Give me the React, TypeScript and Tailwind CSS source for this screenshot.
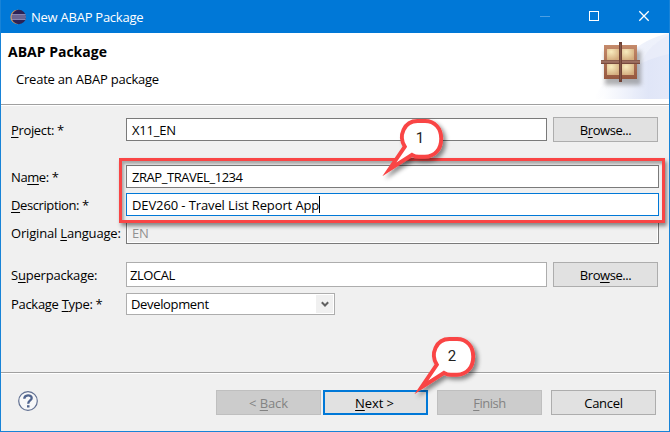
import type { ReactNode } from "react";

const U = ({ children }: { children: ReactNode }) => (
  <span className="underline decoration-1 underline-offset-2">{children}</span>
);

function Row({ label, labelClass, className, children }: { label: ReactNode; labelClass: string; className: string; children: ReactNode }) {
  return (
    <div className={`flex items-center ${className}`}>
      <label className={`w-[118px] shrink-0 whitespace-nowrap pl-[3px] ${labelClass}`}>{label}</label>
      {children}
    </div>
  );
}

function Button({ children, className }: { children: ReactNode; className: string }) {
  return (
    <button className={`flex h-[25px] w-[105px] shrink-0 items-center justify-center ${className}`}>{children}</button>
  );
}

const normal = "border border-[#adadad] bg-[#e1e1e1]";
const disabled = "border border-[#bfbfbf] bg-[#cccccc] text-[#838383]";

function EclipseIcon() {
  return (
    <svg width="18" height="16" viewBox="0 0 18 16">
      <circle cx="8.6" cy="8" r="7.2" fill="#d99a5a" />
      <circle cx="9.8" cy="8" r="7.2" fill="#2c2255" />
      <path d="M2.8 5.9h13.8M2.2 8h14.8M2.8 10.1h13.8" stroke="#a5a6cf" strokeWidth="1.1" />
    </svg>
  );
}

function PackageBanner() {
  return (
    <svg width="76" height="71" viewBox="593 33 76 71">
      <defs>
        <linearGradient id="haze" x1="0" x2="1">
          <stop offset="0" stopColor="#fff" />
          <stop offset="0.7" stopColor="#dfe5f7" />
          <stop offset="1" stopColor="#e3e8f8" />
        </linearGradient>
        <linearGradient id="frame" x1="0" x2="0" y1="0" y2="1">
          <stop offset="0" stopColor="#c58b6b" />
          <stop offset="1" stopColor="#96583f" />
        </linearGradient>
        <radialGradient id="pane" cx="0.35" cy="0.25" r="0.8">
          <stop offset="0" stopColor="#f8ebbd" />
          <stop offset="1" stopColor="#d4ad7e" />
        </radialGradient>
        <linearGradient id="barH" x1="0" x2="0" y1="0" y2="1">
          <stop offset="0" stopColor="#805344" />
          <stop offset="0.5" stopColor="#a7796a" />
          <stop offset="1" stopColor="#683b30" />
        </linearGradient>
        <filter id="soft" x="-50%" y="-50%" width="200%" height="200%">
          <feGaussianBlur stdDeviation="2" />
        </filter>
      </defs>
      <path d="M669 33C637 41 614 61 594 99H669Z" fill="url(#haze)" opacity="0.55" />
      <path d="M669 35C648 46 638 58 632 99H669Z" fill="#e3e8f8" opacity="0.5" />
      <path d="M669 54C640 60 615 76 600 99H669Z" fill="url(#haze)" opacity="0.9" />
      <rect x="605" y="51" width="36" height="34" fill="#666" opacity="0.5" filter="url(#soft)" />
      <rect x="604" y="45" width="33" height="34" fill="url(#frame)" />
      <rect x="607" y="49" width="12" height="11" fill="url(#pane)" />
      <rect x="622" y="49" width="12" height="11" fill="url(#pane)" />
      <rect x="607" y="64" width="12" height="11" fill="url(#pane)" />
      <rect x="622" y="64" width="12" height="11" fill="url(#pane)" />
      <rect x="601" y="60" width="39" height="4" fill="url(#barH)" />
      <rect x="619" y="42" width="3" height="40" fill="#704236" />
      <path d="M620.5 44V80" stroke="#805648" />
    </svg>
  );
}

function Callout({ n, className }: { n: string; className: string }) {
  return (
    <div className={`absolute h-[72px] w-[76px] ${className}`}>
      <svg className="absolute inset-0" width="76" height="72" viewBox="0 0 76 72">
        <defs>
          <filter id={`shade${n}`} x="-30%" y="-30%" width="170%" height="170%">
            <feDropShadow dx="3" dy="3" stdDeviation="2.2" floodColor="#000" floodOpacity="0.45" />
          </filter>
        </defs>
        <path
          d="M27.8 30.6C21 20 27 5 40.5 5H48C58 5 64.2 12.5 64.2 22.7C64.2 33 58 40.7 48 40.7H42C39 40.7 37 40 35 38.8L12.3 53.4Z"
          fill="#fff" stroke="#f94545" strokeWidth="3.9" strokeMiterlimit="10" filter={`url(#shade${n})`}
        />
      </svg>
      <span className="absolute left-[23px] top-[12px] w-[40px] text-center font-['Roboto',sans-serif] text-[15px] leading-5 tracking-normal text-[#222]">{n}</span>
    </div>
  );
}

export default function App() {
  return (
    <div className="relative flex h-[432px] w-[670px] flex-col overflow-hidden border border-t-0 border-[#1883d7] bg-[#f0f0f0] font-['Open_Sans',sans-serif] text-[13px] leading-[18px] tracking-[-0.3px] text-black">
      <header className="flex h-[33px] shrink-0 items-center bg-[#0078d7] pl-[8px] text-white">
        <EclipseIcon />
        <h1 className="ml-[4px] tracking-[-0.25px]">New ABAP Package</h1>
        <svg className="ml-auto" width="130" height="33" viewBox="539 0 130 33" fill="none" stroke="#fff">
          <path d="M540 16.5h10" stroke="#4c9fe3" />
          <rect x="589.5" y="11.5" width="9" height="9" />
          <path d="M639.3 11.3l9.4 9.4M648.7 11.3l-9.4 9.4" strokeWidth="1.3" />
        </svg>
      </header>

      <section className="flex h-[72px] shrink-0 justify-between border-b border-[#a0a0a0] bg-white">
        <div className="pl-[7px] pt-[10px]">
          <h2 className="text-[14px] font-bold tracking-normal">ABAP Package</h2>
          <p className="ml-[8px] mt-[9px] tracking-[-0.22px]">Create an ABAP package</p>
        </div>
        <PackageBanner />
      </section>

      <main className="h-[267px] shrink-0 border-t border-white pl-[7px] pt-[11px]">
        <Row className="h-[25px]" labelClass="tracking-[-0.35px]" label={<><U>P</U>roject: *</>}>
          <div className="flex h-[23px] w-[421px] items-center border border-[#7a7a7a] bg-white pl-[5px] tracking-[-0.2px]">X11_EN</div>
          <Button className={`ml-[6px] tracking-[-0.45px] ${normal}`}><span>B<U>r</U>owse...</span></Button>
        </Row>
        <Row className="mt-[23px] h-[23px]" labelClass="tracking-[-0.4px]" label={<>Na<U>m</U>e: *</>}>
          <div className="flex h-[23px] w-[533px] items-center border border-[#7a7a7a] bg-white pl-[5px] tracking-[-0.45px]">ZRAP_TRAVEL_1234</div>
        </Row>
        <Row className="mt-[5px] h-[23px]" labelClass="tracking-[-0.4px]" label={<><U>D</U>escription: *</>}>
          <div className="flex h-[23px] w-[533px] items-center border border-[#0078d7] bg-white pl-[5px] tracking-[-0.11px]">
            DEV260 - Travel List Report App<i className="h-[17px] w-px bg-black" />
          </div>
        </Row>
        <Row className="mt-[5px] h-[23px]" labelClass="tracking-[-0.18px]" label={<>Original <U>L</U>anguage:</>}>
          <div className="h-[23px] w-[533px] border border-[#7a7a7a]">
            <div className="flex h-full items-center border border-white pl-[4px] text-[#919191]">EN</div>
          </div>
        </Row>
        <Row className="mt-[18px] h-[25px]" labelClass="tracking-[-0.2px]" label={<>S<U>u</U>perpackage:</>}>
          <div className="flex h-[25px] w-[421px] items-center border border-[#adadad] bg-white pl-[3px] tracking-[-0.45px]">ZLOCAL</div>
          <Button className={`ml-[6px] tracking-[-0.45px] ${normal}`}><span>Bro<U>w</U>se...</span></Button>
        </Row>
        <Row className="mt-[6px] h-[22px]" labelClass="tracking-[-0.3px]" label={<>Package <U>T</U>ype: *</>}>
          <div className="flex h-[22px] w-[209px] items-center justify-between border border-[#adadad] bg-white pl-[4px] pr-px tracking-[-0.35px]">
            Development
            <span className="flex h-[18px] w-[17px] items-center justify-center bg-[#f0f0f0]">
              <svg width="8" height="7" viewBox="0 0 8 7" fill="none" stroke="#606060" strokeWidth="2"><path d="M.8 1.3L4 4.5 7.2 1.3" /></svg>
            </span>
          </div>
        </Row>
      </main>

      <footer className="flex h-[59px] shrink-0 border-t border-[#a0a0a0]">
        <div className="flex w-full border-t border-white pl-[17px] pt-[16px]">
          <svg className="mt-[1px]" width="20" height="20" viewBox="0 0 20 20" fill="none">
            <circle cx="10" cy="10" r="9.3" fill="#f7f7f8" stroke="#617092" strokeWidth="1.2" />
            <path d="M6.3 7.8C6.3 3.3 13.7 3.2 13.7 7.1C13.7 9.6 10.2 9.4 10.2 12.7" stroke="#50648e" strokeWidth="2.3" />
            <path d="M9 14.2h2.5v2.3H9z" fill="#50648e" />
          </svg>
          <Button className={`ml-[178px] tracking-[-0.1px] ${disabled}`}><span>&lt; <U>B</U>ack</span></Button>
          <Button className="ml-[2px] border-2 border-[#0078d7] bg-[#e1e1e1] pr-[2px] tracking-[-0.1px]"><span><U>N</U>ext &gt;</span></Button>
          <Button className={`ml-[9px] tracking-[-0.45px] ${disabled}`}><span><U>F</U>inish</span></Button>
          <Button className={`ml-[9px] tracking-[-0.3px] ${normal}`}>Cancel</Button>
        </div>
      </footer>

      <div className="absolute left-[118px] top-[158px] h-[65px] w-[546px] border-[3px] border-[#f94545] shadow-[2px_3px_4px_rgba(0,0,0,0.45),inset_2px_3px_3px_rgba(0,0,0,0.3)]" />
      <Callout n="1" className="left-[376px] top-[116px]" />
      <Callout n="2" className="left-[408px] top-[334px]" />
    </div>
  );
}
